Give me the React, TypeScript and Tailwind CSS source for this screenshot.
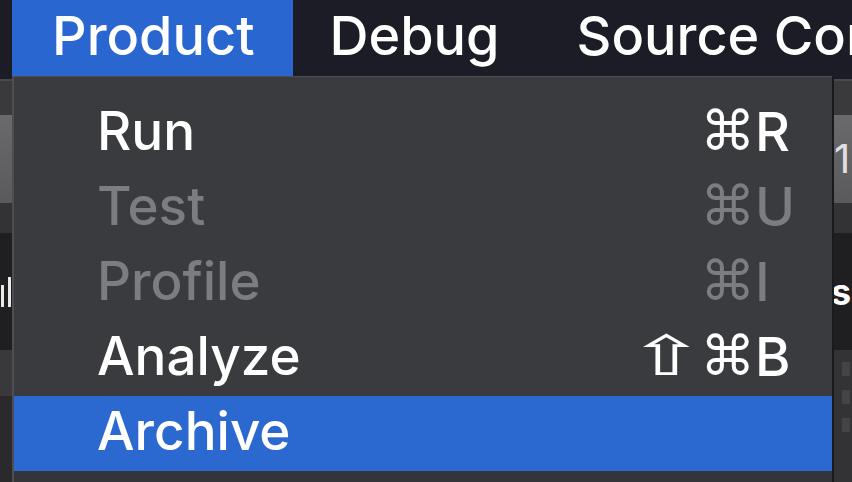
import React from "react";

type Item = {
  label: string;
  mods: string;
  key: string;
  enabled: boolean;
  selected?: boolean;
};

const ITEMS: Item[] = [
  { label: "Run", mods: "⌘", key: "R", enabled: true },
  { label: "Test", mods: "⌘", key: "U", enabled: false },
  { label: "Profile", mods: "⌘", key: "I", enabled: false },
  { label: "Analyze", mods: "⇧⌘", key: "B", enabled: true },
  { label: "Archive", mods: "", key: "", enabled: true, selected: true },
];

const FONT = "font-['Inter','Liberation_Sans','DejaVu_Sans',sans-serif]";

const Shortcut: React.FC<{ mods: string; k: string }> = ({ mods, k }) => {
  if (!mods && !k) return null;
  return (
    <span className="flex items-center">
      <span className="flex items-center justify-end font-['DejaVu_Sans',sans-serif] text-[55px] leading-none">
        {mods.split("").map((m, i) =>
          m === "⇧" ? (
            <span key={i} className="inline-block scale-x-[1.7] origin-center mr-[11px]">
              {m}
            </span>
          ) : (
            <span key={i}>{m}</span>
          )
        )}
      </span>
      <span className="w-[40px] text-[54px] leading-none">{k}</span>
    </span>
  );
};

const App: React.FC = () => {
  return (
    <div className={`w-[852px] h-[482px] overflow-hidden bg-[#1b1c25] ${FONT} font-medium flex flex-col`}>
      {/* Menu bar */}
      <div className="h-[76px] flex items-stretch bg-[#1b1c25] text-white text-[54px] leading-none shrink-0 pb-[4px]">
        <div className="w-[12px] shrink-0" />
        <div className="bg-[#2a66cf] -mb-[4px] pb-[4px] pl-[40px] pr-[38px] flex items-center">Product</div>
        <div className="pl-[37px] pr-[39px] flex items-center">Debug</div>
        <div className="pl-[38px] flex items-center whitespace-nowrap">Source Control</div>
      </div>

      <div className="flex flex-1 min-h-0">
        {/* window behind, left edge */}
        <div className="w-[12px] shrink-0 flex flex-col">
          <div className="h-[2px] bg-[#4a4a4e] mt-[3px]" />
          <div className="h-[34px] bg-[#3a3a3c]" />
          <div className="h-[88px] bg-gradient-to-b from-[#6a6a6c] to-[#5a5a5c]" />
          <div className="h-[30px] bg-[#333336]" />
          <div className="h-[117px] bg-[#1f1f21] flex items-center gap-[4px] pl-[1px]">
            <div className="w-[3px] h-[22px] bg-[#e8e8e8] mt-[8px]" />
            <div className="w-[3px] h-[30px] bg-[#e8e8e8]" />
          </div>
          <div className="h-[46px] bg-[#39393b]" />
          <div className="flex-1 bg-[#2a2a2c]" />
        </div>

        {/* Dropdown menu */}
        <div className="w-[820px] shrink-0 bg-[#3a3b3f] border-l-2 border-t border-[#4d4e52] pt-[19px] flex flex-col">
          {ITEMS.map((item) => (
            <div
              key={item.label}
              className={`h-[75px] pb-[4px] flex items-center justify-between pl-[83px] pr-[37px] text-[53px] leading-none ${
                item.selected ? "bg-[#2b68d0] text-white" : item.enabled ? "text-white" : "text-[#7c7d81]"
              }`}
            >
              <span>{item.label}</span>
              <Shortcut mods={item.mods} k={item.key} />
            </div>
          ))}
          <div className="flex-1 bg-[#34353a]" />
        </div>

        {/* window behind, right edge */}
        <div className="flex-1 flex flex-col border-l-2 border-[#1a1a1c]">
          <div className="h-[2px] bg-[#4a4a4e] mt-[3px]" />
          <div className="h-[34px] bg-[#3a3a3c]" />
          <div className="h-[88px] bg-gradient-to-b from-[#6a6a6c] to-[#5a5a5c] flex items-end pb-[24px] text-[#e0e0e0] text-[40px] font-normal leading-none overflow-hidden">
            <span>1</span>
          </div>
          <div className="h-[30px] bg-[#333336]" />
          <div className="h-[117px] bg-[#1f1f21] flex items-center text-white text-[36px] font-bold leading-none overflow-hidden">
            <span className="-ml-[3px]">sc</span>
          </div>
          <div className="flex-1 bg-[#333335] flex flex-col gap-[14px] pl-[8px] pt-[12px]">
            <div className="w-[8px] h-[14px] bg-[#444446]" />
            <div className="w-[8px] h-[14px] bg-[#444446]" />
            <div className="w-[8px] h-[14px] bg-[#444446]" />
          </div>
        </div>
      </div>
    </div>
  );
};

export default App;
